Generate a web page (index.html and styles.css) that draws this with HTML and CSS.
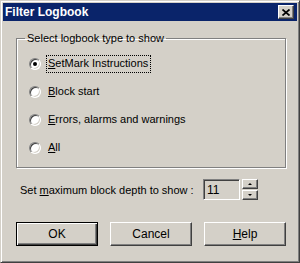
FILE: index.html
```html
<!DOCTYPE html>
<html>
  <head>
    <meta name="viewport" content="width=device-width,initial-scale=1.0">
    <title>Filter Logbook</title>
    <link rel="stylesheet" href="styles.css">
  </head>
  <body>
    <div class="window">
      <!-- Title bar -->
      <div class="titlebar">
        <span class="title">Filter Logbook</span>
        <div class="close-btn">
          <svg width="8" height="7" viewBox="0 0 8 7">
            <path d="M0.5 0.5 L7.5 6.5 M7.5 0.5 L0.5 6.5" stroke="#000" stroke-width="1.7" fill="none"/>
          </svg>
        </div>
      </div>

      <div class="dialog-body">
        <!-- Logbook type -->
        <fieldset class="group">
          <legend>Select logbook type to show</legend>
          <div class="option">
            <span class="radio checked"></span>
            <span class="option-text focused"><u>S</u>etMark Instructions</span>
          </div>
          <div class="option">
            <span class="radio"></span>
            <span class="option-text"><u>B</u>lock start</span>
          </div>
          <div class="option">
            <span class="radio"></span>
            <span class="option-text"><u>E</u>rrors, alarms and warnings</span>
          </div>
          <div class="option">
            <span class="radio"></span>
            <span class="option-text"><u>A</u>ll</span>
          </div>
        </fieldset>

        <!-- Block depth -->
        <div class="depth-row">
          <span class="depth-label">Set <u>m</u>aximum block depth to show :</span>
          <div class="depth-input">11</div>
          <div class="spinner">
            <div class="spin-btn"><span class="arrow-up"></span></div>
            <div class="spin-btn"><span class="arrow-down"></span></div>
          </div>
        </div>

        <!-- Buttons -->
        <div class="buttons">
          <div class="btn default">OK</div>
          <div class="btn">Cancel</div>
          <div class="btn"><u>H</u>elp</div>
        </div>
      </div>
    </div>
  </body>
</html>
```

FILE: styles.css
```css
body {
  margin: 0;
  background: #d4d0c8;
  font-family: "Liberation Sans", Arial, sans-serif;
  font-size: 11px;
  color: #000;
}

u { text-decoration: underline; text-underline-offset: 1px; }

.window {
  width: 300px;
  height: 263px;
  box-sizing: border-box;
  background: #d4d0c8;
  border: 1px solid;
  border-color: #d4d0c8 #404040 #404040 #d4d0c8;
  box-shadow: inset 1px 1px #fff, inset -1px -1px #808080;
  padding: 2px;
  display: flex;
  flex-direction: column;
}

/* Title bar */
.titlebar {
  height: 18px;
  background: #0a246a;
  display: flex;
  align-items: center;
  justify-content: space-between;
  padding: 0 3px 0 2px;
}

.title {
  color: #fff;
  font-weight: bold;
  font-size: 12px;
}

.close-btn {
  width: 16px;
  height: 14px;
  box-sizing: border-box;
  background: #d4d0c8;
  border: 1px solid;
  border-color: #fff #404040 #404040 #fff;
  box-shadow: inset -1px -1px #808080;
  display: flex;
  align-items: center;
  justify-content: center;
  padding-right: 1px;
}

.close-btn svg { display: block; }

/* Body */
.dialog-body {
  padding: 11px 11px 0 13px;
  display: flex;
  flex-direction: column;
}

.group {
  margin: 0;
  min-width: 0;
  padding: 11px 10px 11px 12px;
  border: 1px solid #808080;
  box-shadow: 1px 1px 0 #fff, inset 1px 1px 0 #fff;
  display: flex;
  flex-direction: column;
  gap: 12px;
}

.group legend {
  padding: 0 2px;
  margin-left: -4px;
  line-height: 13px;
}

.option {
  display: flex;
  align-items: center;
  height: 16px;
}

.radio {
  width: 12px;
  height: 12px;
  box-sizing: border-box;
  border-radius: 50%;
  background: #fff;
  border: 1px solid;
  border-color: #808080 #fff #fff #808080;
  box-shadow: inset 1px 1px #404040, inset -1px -1px #d4d0c8;
  display: flex;
  align-items: center;
  justify-content: center;
  margin-right: 5px;
}

.radio.checked::after {
  content: "";
  width: 4px;
  height: 4px;
  border-radius: 50%;
  background: #000;
}

.option-text {
  padding: 1px 2px 2px 1px;
  border: 1px dotted transparent;
  line-height: 13px;
}

.option-text.focused { border-color: #000; }

/* Depth row */
.depth-row {
  display: flex;
  align-items: center;
  margin-top: 11px;
}

.depth-label {
  width: 187px;
  box-sizing: border-box;
  padding-left: 4px;
}

.depth-input {
  width: 37px;
  height: 21px;
  box-sizing: border-box;
  border: 1px solid;
  border-color: #808080 #fff #fff #808080;
  box-shadow: inset 1px 1px #404040, inset -1px -1px #d4d0c8;
  padding: 3px 0 0 3px;
  font-size: 12px;
}

.spinner {
  display: flex;
  flex-direction: column;
  gap: 1px;
  margin-left: 2px;
}

.spin-btn {
  width: 16px;
  height: 10px;
  box-sizing: border-box;
  border: 1px solid;
  border-color: #fff #404040 #404040 #fff;
  box-shadow: inset -1px -1px #808080;
  display: flex;
  align-items: center;
  justify-content: center;
}

.arrow-up {
  border-left: 2px solid transparent;
  border-right: 2px solid transparent;
  border-bottom: 2px solid #000;
}

.arrow-down {
  border-left: 2px solid transparent;
  border-right: 2px solid transparent;
  border-top: 2px solid #000;
}

/* Buttons */
.buttons {
  display: flex;
  gap: 12px;
  margin-top: 22px;
}

.btn {
  width: 82px;
  height: 24px;
  box-sizing: border-box;
  border: 1px solid;
  border-color: #fff #404040 #404040 #fff;
  box-shadow: inset -1px -1px #808080;
  display: flex;
  align-items: center;
  justify-content: center;
  font-size: 12px;
}

.btn.default {
  border-color: #000;
  box-shadow: inset 1px 1px #fff, inset -1px -1px #404040, inset -2px -2px #808080;
}
```
